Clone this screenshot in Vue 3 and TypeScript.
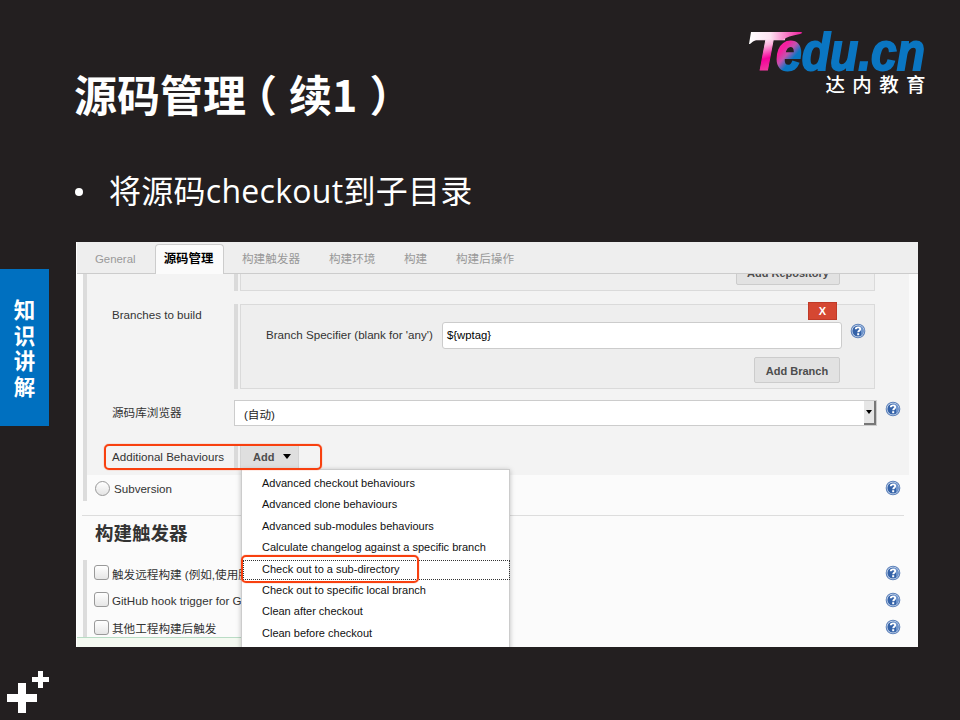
<script setup lang="ts">
import { defineComponent, h } from 'vue'

interface Tab {
  label: string
  active?: boolean
}

const tabs: Tab[] = [
  { label: 'General' },
  { label: '源码管理', active: true },
  { label: '构建触发器' },
  { label: '构建环境' },
  { label: '构建' },
  { label: '构建后操作' },
]

const behaviours: string[] = [
  'Advanced checkout behaviours',
  'Advanced clone behaviours',
  'Advanced sub-modules behaviours',
  'Calculate changelog against a specific branch',
  'Check out to a sub-directory',
  'Check out to specific local branch',
  'Clean after checkout',
  'Clean before checkout',
]
const focused = 4

const triggers: string[] = [
  '触发远程构建 (例如,使用脚',
  'GitHub hook trigger for GI',
  '其他工程构建后触发',
]

const sideLabel: string[] = ['知', '识', '讲', '解']

const HelpIcon = defineComponent({
  render() {
    return h('svg', { width: 16, height: 16, viewBox: '0 0 16 16' }, [
      h('circle', { cx: 8, cy: 8, r: 6.8, fill: '#dbe6f5', stroke: '#5f83bb', 'stroke-width': 1.1 }),
      h('circle', { cx: 8, cy: 8, r: 5.6, fill: '#3462a8' }),
      h('path', { d: 'M8 2.4A5.6 5.6 0 0 1 11 12.700C12 9 10 6 8 2.400Z', fill: '#6f95cc' }),
      h('path', {
        d: 'M5.800 6.300C5.800 3.700 10.300 3.800 10.200 6.200C10.100 7.700 8.200 7.600 8.200 9.300',
        fill: 'none',
        stroke: '#fff',
        'stroke-width': 1.9,
      }),
      h('rect', { x: 7.2, y: 10.2, width: 2, height: 2, fill: '#fff' }),
    ])
  },
})
</script>

<template>
  <div class="slide">
    <header class="head">
      <h1 class="title">源码管理<span class="open">（</span>续1<span class="close">）</span></h1>
      <div class="logo">
        <svg class="wordmark" width="184" height="44" viewBox="0 0 184 44">
          <defs>
            <linearGradient id="tee" gradientUnits="userSpaceOnUse" x1="14" y1="4" x2="24" y2="42">
              <stop offset="0.1" stop-color="#ffffff" />
              <stop offset="0.35" stop-color="#fbb6df" />
              <stop offset="0.68" stop-color="#f5009b" />
              <stop offset="1" stop-color="#ef3f9f" />
            </linearGradient>
            <linearGradient id="swoosh" x1="0" y1="0" x2="1" y2="0">
              <stop offset="0" stop-color="#ffffff" />
              <stop offset="0.4" stop-color="#fde3f2" />
              <stop offset="1" stop-color="#f0189c" />
            </linearGradient>
            <linearGradient id="blend" gradientUnits="userSpaceOnUse" x1="34" y1="22" x2="48" y2="34">
              <stop offset="0" stop-color="#f5209f" />
              <stop offset="0.35" stop-color="#c353ae" />
              <stop offset="0.75" stop-color="#0a76c2" />
            </linearGradient>
          </defs>
          <text class="mark tee" x="3" y="42" textLength="31" lengthAdjust="spacingAndGlyphs">T</text>
          <path d="M3 4H53Q56 5 52 6Q40 8 34 12Q20 11 8 12Q5 13 2 16H1Z" fill="url(#swoosh)" />
          <text class="mark word" x="28" y="42" textLength="149" lengthAdjust="spacingAndGlyphs">edu.cn</text>
        </svg>
        <span class="brand">达内教育</span>
      </div>
    </header>

    <div class="bullet"><span class="dot"></span><p>将源码checkout到子目录</p></div>

    <div class="main">
      <aside class="side"><span v-for="c in sideLabel" :key="c">{{ c }}</span></aside>

      <section class="shot">
        <nav class="tabs">
          <span v-for="(t, i) in tabs" :key="t.label" :class="['tab', 't' + i, { active: t.active }]">{{ t.label }}</span>
        </nav>

        <div class="git">
          <div class="repos">
            <div class="rail"></div>
            <div class="box repo-box"><button class="btn add-repo">Add Repository</button></div>
          </div>

          <div class="row branches">
            <label class="lbl">Branches to build</label>
            <div class="rail"></div>
            <div class="box branch-box">
              <button class="del">X</button>
              <div class="spec">
                <label>Branch Specifier (blank for 'any')</label>
                <div class="input">${wptag}</div>
                <HelpIcon class="help" />
              </div>
              <button class="btn add-branch">Add Branch</button>
            </div>
          </div>

          <div class="row browser">
            <label class="lbl">源码库浏览器</label>
            <div class="select"><span>(自动)</span><i class="arrow"><b class="caret"></b></i></div>
            <HelpIcon class="help" />
          </div>

          <div class="row extra">
            <label class="lbl">Additional Behaviours</label>
            <div class="rail"></div>
            <div class="add">Add<b class="caret big"></b></div>
            <ul class="menu">
              <li v-for="(b, i) in behaviours" :key="b" :class="{ focus: i === focused }">
                {{ b }}
                <em v-if="i === focused" class="ring pick"></em>
              </li>
            </ul>
            <em class="ring whole"></em>
          </div>
        </div>

        <div class="svn"><i class="radio"></i><span>Subversion</span><HelpIcon class="help" /></div>

        <h2 class="section">构建触发器</h2>
        <div class="triggers">
          <div v-for="t in triggers" :key="t" class="trigger">
            <i class="check"></i><span>{{ t }}</span><HelpIcon class="help" />
          </div>
          <div class="savebar"></div>
        </div>
      </section>
    </div>

    <footer class="foot">
      <svg width="50" height="44" viewBox="0 0 50 44" fill="#fff">
        <path d="M18 13h8v11h11v8H26v11h-8V32H7v-8h11z" />
        <path d="M38 1h5v6h6v5h-6v6h-5v-6h-6V7h6z" />
      </svg>
    </footer>
  </div>
</template>

<style>
body { background: #231f20; overflow: hidden; }
</style>

<style scoped>
* { box-sizing: border-box; }
.slide {
  width: 960px; height: 720px; overflow: hidden; background: #231f20; color: #fff;
  display: flex; flex-direction: column;
  font-family: "Liberation Sans", "Noto Sans CJK SC", sans-serif;
}
.head { height: 150px; padding: 28px 32px 0 74px; display: flex; justify-content: space-between; flex: none; }
.title {
  margin: 35px 0 0; height: 60px; line-height: 60px; font-size: 43px; font-weight: 700; white-space: nowrap;
  font-family: "Noto Sans CJK SC", sans-serif;
}
.open { margin-left: -12px; margin-right: 12px; }
.close { margin-left: 12px; }
.logo { width: 184px; display: flex; flex-direction: column; margin-right: -4px; }
.wordmark { display: block; flex: none; overflow: visible; }
.mark { font: italic 700 51px "Liberation Sans", sans-serif; }
.tee { fill: url(#tee); stroke: url(#tee); stroke-width: 1px; }
.word { fill: url(#blend); stroke: url(#blend); stroke-width: 1.800px; }
.brand {
  align-self: flex-end; height: 24px; line-height: 24px; margin-right: -1px; font-size: 19.500px; letter-spacing: 7.400px; white-space: nowrap; font-weight: 500;
  font-family: "Noto Sans CJK SC", sans-serif;
}
.bullet { height: 92px; padding: 17px 0 0 75px; display: flex; flex: none; }
.dot { width: 8px; height: 8px; border-radius: 50%; background: #fff; margin: 21px 26px 0 0; }
.bullet p { margin: 0; font: 32px/48px "Open Sans", "Noto Sans CJK SC", sans-serif; letter-spacing: 0.28px; }

.main { display: flex; height: 405px; flex: none; }
.side {
  width: 49px; height: 157px; margin: 27px 27px 0 0; padding-top: 27px; background: #0070c0;
  display: flex; flex-direction: column; align-items: center;
}
.side span { height: 25.6px; line-height: 25.6px; font-size: 21.500px; font-weight: 700; font-family: "Noto Sans CJK SC", sans-serif; }
.shot {
  width: 842px; height: 405px; overflow: hidden; background: #fbfbfb; color: #333; font-size: 11.6px;
  display: flex; flex-direction: column; border-left: 1px solid #fff;
}
.tabs { height: 32px; flex: none; background: #eee; border-bottom: 1px solid #ccc; display: flex; padding-left: 18px; color: #999; }
.tab { line-height: 34px; white-space: nowrap; height: 34px; }
.t0 { width: 60px; font-size: 11.400px; }
.tab.active {
  width: 69px; height: 30px; margin: 2px 18px 0 0; line-height: 29px; text-align: center; color: #000; font-weight: 700; font-size: 12.4px;
  background: #fbfbfb; border: 1px solid #ccc; border-bottom: 0; border-radius: 4px 4px 0 0; padding-right: 2px;
}
.t2 { width: 87px; }
.t3 { width: 75px; }
.t4 { width: 52px; }

.git { height: 201px; flex: none; width: 826px; margin-left: 6px; background: #f3f3f3; border-left: 4px solid #dcdcdc; }
.rail { width: 4px; background: #dadada; margin-right: 2px; flex: none; }
.box { width: 635px; border: 1px solid #dadada; background: #eee; }
.repos { display: flex; height: 17px; padding-left: 147px; }
.repo-box { border-top: 0; display: flex; justify-content: flex-end; align-items: flex-end; padding: 0 34px 5px 0; overflow: hidden; }
.btn {
  font: 700 11px/26px "Liberation Sans", sans-serif; color: #4d4d4d; background: #e2e2e2; border: 1px solid #ccc;
  border-radius: 2px; padding: 0; height: 26px; flex: none;
}
.add-repo { width: 104px; }
.row { display: flex; position: relative; }
.lbl { width: 147px; padding-left: 25px; flex: none; white-space: nowrap; }
.branches { margin-top: 13px; height: 85px; }
.branches .lbl { line-height: 22px; }
.branch-box { display: flex; flex-direction: column; align-items: flex-end; }
.del {
  margin: -3px 37px 2px 0; width: 29px; height: 18px; padding: 0; flex: none; background: #d54732; border: 1px solid #bf3a28; color: #fff;
  font: 700 11px/17px "Liberation Sans", sans-serif;
}
.spec { display: flex; align-items: center; width: 100%; height: 26px; padding-left: 25px; white-space: nowrap; }
.spec label { width: 176px; padding-bottom: 1px; }
.input { width: 400px; height: 27px; border: 1px solid #ccc; border-radius: 3px; background: #fff; color: #000; line-height: 25px; padding-left: 4px; font-size: 11.300px; }
.spec .help { margin: -8px 0 0 8px; }
.add-branch { width: 86px; margin: 9px 34px 0 0; }
.help { flex: none; }
.browser { margin-top: 11px; height: 26px; }
.browser .lbl { line-height: 25px; }
.select {
  width: 643px; border: 1px solid #ccc; background: #fff; display: flex; justify-content: space-between; color: #222;
  line-height: 27px; padding-left: 9px;
}
.arrow {
  width: 12px; height: 24px; background: #e6e6e6; border-right: 2px solid #777; border-bottom: 2px solid #777;
  display: flex; align-items: center; justify-content: center;
}
.caret { border: 3px solid transparent; border-top: 4px solid #000; border-bottom: 0; }
.caret.big { border-width: 5px 4px 0; margin: -2px 0 0 9px; }
.browser .help { margin: 1px 0 0 8px; }
.extra { margin-top: 18px; height: 26px; }
.extra .lbl { line-height: 26px; }
.add {
  width: 59px; background: #dfdfdf; border: 1px solid #d4d4d4; color: #4d4d4d; font-weight: 700; font-size: 11px; display: flex; align-items: center; padding-left: 12px;
}
.menu {
  position: absolute; left: 154px; top: 25px; width: 269px; height: 200px; margin: 0; padding: 3px 1px; list-style: none; background: #fff; color: #111;
  border: 1px solid #ccc; box-shadow: 0 1px 5px rgba(0, 0, 0, 0.25); font-size: 11px; z-index: 2;
}
.menu li { height: 21.4px; line-height: 21px; padding-left: 19px; position: relative; white-space: nowrap; }
.menu .focus::before { content: ""; position: absolute; left: 0; top: 1px; width: 265px; height: 18px; border: 1px dotted #333; }
.ring { position: absolute; border: 2px solid #f8400f; border-radius: 5px; z-index: 3; box-shadow: 0 0 1px #f8400f; }
.pick { left: -2px; top: -4px; width: 178px; height: 28px; }
.whole { left: 17px; top: 0; width: 218px; height: 26px; }

.svn { display: flex; height: 26px; flex: none; margin-left: 6px; border-left: 4px solid #dcdcdc; padding-left: 8px; position: relative; }
.radio { width: 15px; height: 15px; margin: 6px 4px 0 0; border: 1px solid #999; border-radius: 50%; background: linear-gradient(#fff, #e4e4e4); }
.svn span { line-height: 28px; }
.svn .help { margin: 5px 17px 0 auto; }
.section {
  margin: 14px 14px 0 5px; padding: 4px 0 0 13px; height: 45px; flex: none; border-top: 1px solid #ddd; font-size: 18.500px; line-height: 27px; color: #333;
}
.triggers { flex: none; height: 100px; margin-left: 6px; border-left: 4px solid #dcdcdc; }
.trigger { height: 27.300px; display: flex; align-items: center; padding: 0 0 2px 7px; white-space: nowrap; }
.trigger span { padding-top: 2px; }
.check { width: 15px; height: 15px; border: 1px solid #999; border-radius: 3px; background: linear-gradient(#fff, #e6e6e6); margin-right: 3px; flex: none; }
.trigger .help { margin: 0 17px 0 auto; }
.savebar { height: 20px; width: 200px; margin: -5px 0 0 -10px; background: #f4f9f1; border-top: 1px solid #b9dcc5; position: relative; }
.foot { height: 50px; margin-top: 23px; }
.foot svg { display: block; }
</style>
